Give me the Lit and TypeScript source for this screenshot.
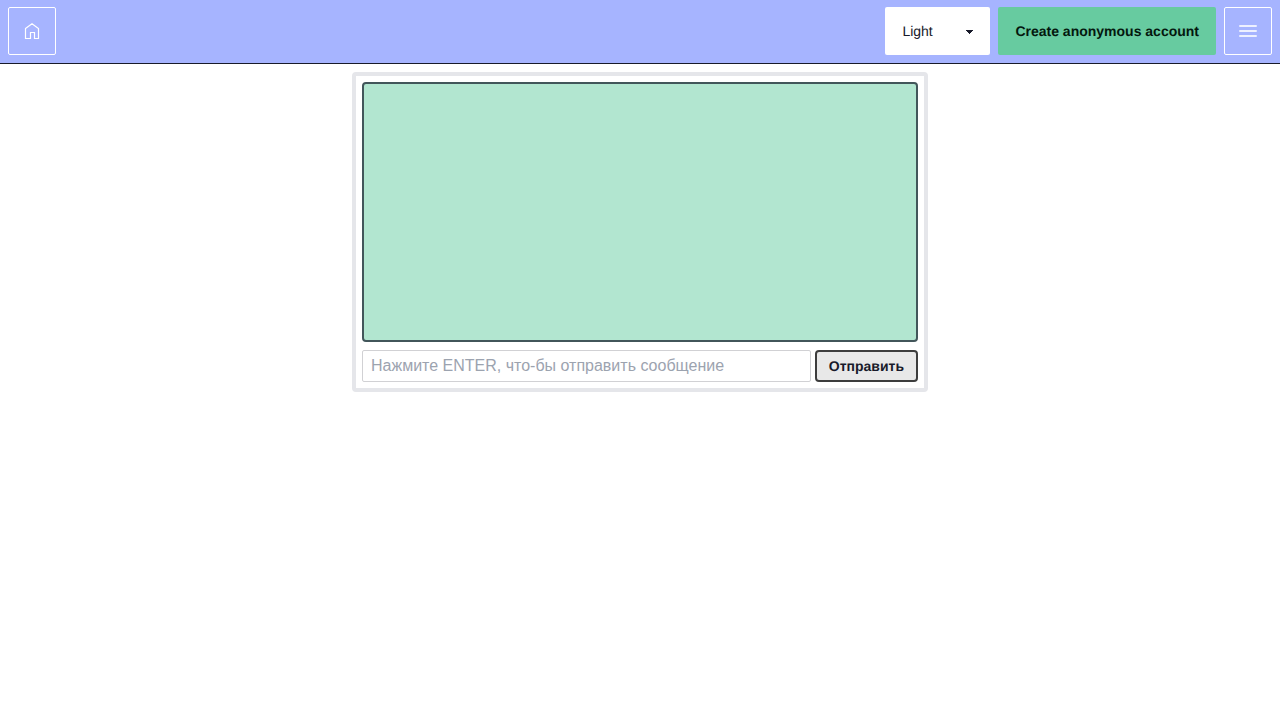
import { LitElement, html, css } from "lit";
import { customElement } from "lit/decorators.js";

@customElement("app-header")
export class AppHeader extends LitElement {
  static styles = css`
    * {
      box-sizing: border-box;
    }
    .bar {
      display: flex;
      align-items: center;
      gap: 8px;
      padding: 7px 8px 8px;
      background: #a6b4ff;
      border-bottom: 1px solid #181a2a;
    }
    .spacer {
      flex: 1;
    }
    .square {
      display: flex;
      align-items: center;
      justify-content: center;
      width: 48px;
      height: 48px;
      padding: 0;
      border: 1px solid #fff;
      border-radius: 2px;
      background: transparent;
      color: #fff;
      cursor: pointer;
    }
    .theme {
      appearance: none;
      width: 105px;
      height: 48px;
      padding: 0 40px 0 17px;
      border: 0;
      border-radius: 2px;
      color: #181a2a;
      font: 14px/28px "Liberation Sans", Arial, sans-serif;
      text-rendering: geometricPrecision;
      background-color: #fff;
      background-image: linear-gradient(45deg, transparent 50%, currentColor 50%),
        linear-gradient(135deg, currentColor 50%, transparent 50%);
      background-position: calc(100% - 20px) calc(50% + 1px), calc(100% - 16px) calc(50% + 1px);
      background-size: 4px 4px, 4px 4px;
      background-repeat: no-repeat;
      cursor: pointer;
    }
    .create {
      height: 48px;
      padding: 0 17px;
      border: 0;
      border-radius: 2px;
      background: #67cba0;
      color: #04180e;
      font: bold 14px/14px "Liberation Sans", Arial, sans-serif;
      text-rendering: geometricPrecision;
      cursor: pointer;
    }
  `;

  render() {
    return html`
      <header class="bar">
        <a class="square" href="#" aria-label="Home">
          <svg width="20" height="20" viewBox="0 0 20 20" fill="none" stroke="currentColor" stroke-width="1.2">
            <path d="M3.5 7.6 L10 2.8 L16.5 7.6 V17.5 H12.5 V11.5 H8.5 V17.5 H3.5 Z" />
          </svg>
        </a>
        <div class="spacer"></div>
        <select class="theme" aria-label="Theme">
          <option>Light</option>
          <option>Dark</option>
        </select>
        <button class="create" type="button">Create anonymous account</button>
        <button class="square" type="button" aria-label="Menu">
          <svg width="20" height="20" viewBox="0 0 20 20" fill="none" stroke="currentColor" stroke-opacity="0.8" stroke-width="2" stroke-linecap="round">
            <path d="M2 5H18M2 10H18M2 15H18" />
          </svg>
        </button>
      </header>
    `;
  }
}

@customElement("chat-panel")
export class ChatPanel extends LitElement {
  static styles = css`
    * {
      box-sizing: border-box;
    }
    .panel {
      display: flex;
      flex-direction: column;
      gap: 8px;
      max-width: 576px;
      margin: 8px auto;
      padding: 6px;
      border: 4px solid #e5e6ea;
      border-radius: 4px;
    }
    .messages {
      min-height: 260px;
      border: 2px solid #42565a;
      border-radius: 4px;
      background: #b2e6d0;
    }
    .composer {
      display: flex;
      gap: 4px;
    }
    .text {
      flex: 1;
      min-width: 0;
      height: 32px;
      padding: 0 8px;
      border: 1px solid #d1d1d4;
      border-radius: 2px;
      background: #fff;
      color: #181a2a;
      font: 16px/24px "Liberation Sans", Arial, sans-serif;
    }
    .text::placeholder {
      color: #9ca3af;
    }
    .send {
      height: 32px;
      padding: 0 12px;
      border: 2px solid #3d3d3d;
      border-radius: 4px;
      background: #e8e8e8;
      color: #181a2a;
      font: bold 14px/14px "Liberation Sans", Arial, sans-serif;
      text-rendering: geometricPrecision;
      cursor: pointer;
    }
  `;

  render() {
    return html`
      <main class="panel">
        <div class="messages" role="log"></div>
        <form class="composer" @submit=${(e: Event) => e.preventDefault()}>
          <input
            class="text"
            type="text"
            aria-label="Сообщение"
            placeholder="Нажмите ENTER, что-бы отправить сообщение"
          />
          <button class="send" type="submit">Отправить</button>
        </form>
      </main>
    `;
  }
}

@customElement("app-root")
export class AppRoot extends LitElement {
  static styles = css`
    :host {
      display: block;
      min-height: 100vh;
      background: #fff;
    }
  `;

  render() {
    return html`<app-header></app-header><chat-panel></chat-panel>`;
  }
}
